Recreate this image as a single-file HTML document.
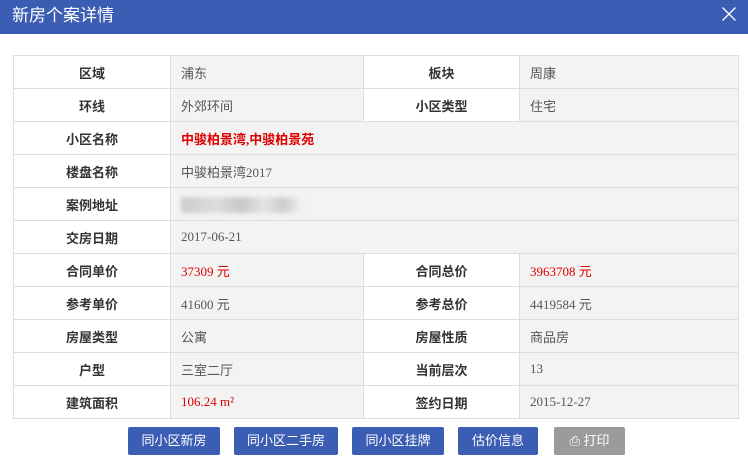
<!DOCTYPE html>
<html><head><meta charset="utf-8"><style>
*{margin:0;padding:0;box-sizing:border-box}
body{width:748px;height:462px;background:#fff;font-family:"Liberation Sans","Noto Sans CJK SC",sans-serif;overflow:hidden;position:relative}
.hd{height:34px;background:#3c5db4;color:#fff;font-size:17px;line-height:32px;padding-left:12px}
.x{position:absolute;right:11px;top:6px;width:16px;height:16px}
table{position:absolute;left:13px;top:55px;width:726px;border-collapse:collapse;font-size:13px}
td{height:33px;border:1px solid #dedede;color:#555;padding-left:10px}
td.l{background:#fff;text-align:center;font-weight:bold;color:#333;padding:0}
td.v{background:#f4f3f4;font-family:"Liberation Serif","Noto Sans CJK SC",serif;font-size:13px}
td.r{color:#d00}
.blur{display:inline-block;width:120px;height:16px;background:linear-gradient(90deg,#ccc,#ddd 30%,#c8c8c8 50%,#e4e4e4 70%,#ccc 85%,#f0f0f0);filter:blur(2px);vertical-align:middle}
.b{position:absolute;top:427px;height:28px;background:#3c5db4;color:#fff;font-size:13px;line-height:28px;text-align:center;border-radius:2px}
</style></head><body>
<div class="hd">新房个案详情</div>
<svg class="x" viewBox="0 0 16 16"><path d="M1.5 1.5L14.5 14.5M14.5 1.5L1.5 14.5" stroke="#fff" stroke-width="1.3"/></svg>
<table>
<colgroup><col style="width:157px"><col style="width:193px"><col style="width:156px"><col></colgroup>
<tr><td class="l">区域</td><td class="v">浦东</td><td class="l">板块</td><td class="v">周康</td></tr>
<tr><td class="l">环线</td><td class="v">外郊环间</td><td class="l">小区类型</td><td class="v">住宅</td></tr>
<tr><td class="l">小区名称</td><td class="v r" colspan="3" style="font-weight:bold">中骏柏景湾,中骏柏景苑</td></tr>
<tr><td class="l">楼盘名称</td><td class="v" colspan="3">中骏柏景湾2017</td></tr>
<tr><td class="l">案例地址</td><td class="v" colspan="3"><span class="blur"></span></td></tr>
<tr><td class="l">交房日期</td><td class="v" colspan="3">2017-06-21</td></tr>
<tr><td class="l">合同单价</td><td class="v r">37309 元</td><td class="l">合同总价</td><td class="v r">3963708 元</td></tr>
<tr><td class="l">参考单价</td><td class="v">41600 元</td><td class="l">参考总价</td><td class="v">4419584 元</td></tr>
<tr><td class="l">房屋类型</td><td class="v">公寓</td><td class="l">房屋性质</td><td class="v">商品房</td></tr>
<tr><td class="l">户型</td><td class="v">三室二厅</td><td class="l">当前层次</td><td class="v">13</td></tr>
<tr><td class="l">建筑面积</td><td class="v r">106.24 m²</td><td class="l">签约日期</td><td class="v">2015-12-27</td></tr>
</table>
<div class="b" style="left:128px;width:92px">同小区新房</div>
<div class="b" style="left:234px;width:104px">同小区二手房</div>
<div class="b" style="left:352px;width:92px">同小区挂牌</div>
<div class="b" style="left:458px;width:80px">估价信息</div>
<div class="b" style="left:554px;width:71px;background:#9b9b9b">⎙ 打印</div>
</body></html>
